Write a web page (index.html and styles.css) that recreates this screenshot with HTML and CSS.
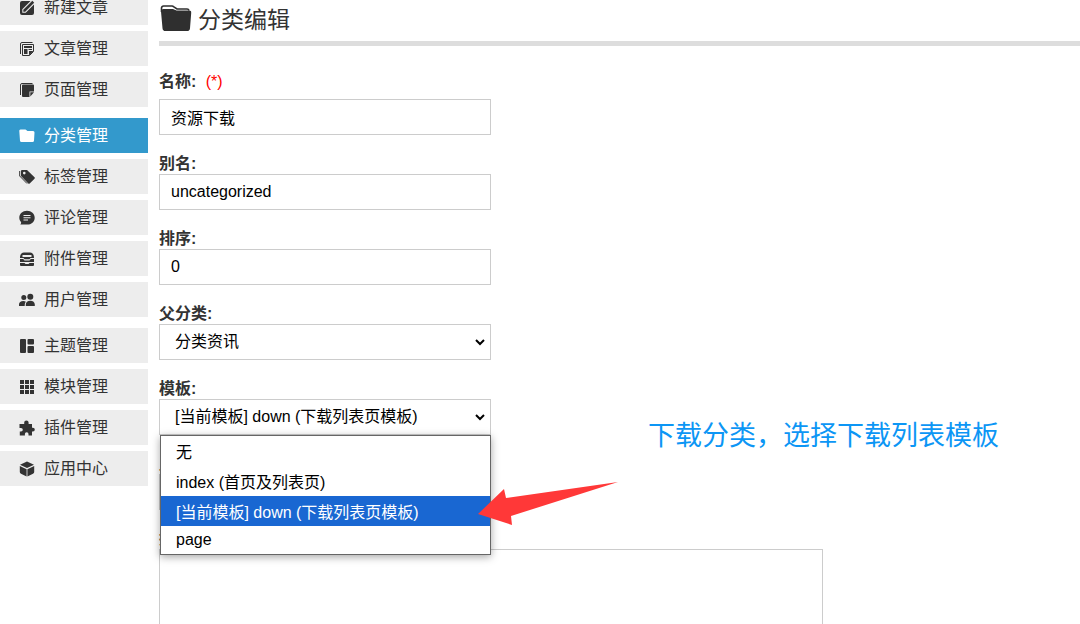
FILE: index.html
```
<!DOCTYPE html>
<html lang="zh-CN">
<head>
    <meta charset="UTF-8">
    <meta name="viewport" content="width=device-width, initial-scale=1.0">
    <title>分类编辑</title>
    <link rel="stylesheet" href="styles.css">
</head>
<body>
<div class="layout">

    <nav class="sidebar">
        <ul class="menu-group">
            <li><a href="#">
                <svg class="icon" viewBox="0 0 16 16"><path d="M3 1h8.500L3.300 9.300v3.400h3.400L15 4.500V13a2 2 0 0 1-2 2H3a2 2 0 0 1-2-2V3a2 2 0 0 1 2-2z"/><path d="M13.300.8l1.900 1.900-9 9H4.300V9.800z"/></svg>
                <span>新建文章</span></a></li>
            <li><a href="#">
                <svg class="icon" viewBox="0 0 16 16"><path class="line" d="M1.500 13V3A1.500 1.500 0 0 1 3 1.500h10.500M3.500 3.500h11v7l-4 4h-7z"/><path d="M5 5h8v2H5zM5 8h3.500v5H5zM9.500 8H13v1H9.500zM10 10h4.500L10 14.500z"/></svg>
                <span>文章管理</span></a></li>
            <li><a href="#">
                <svg class="icon" viewBox="0 0 16 16"><path class="line" d="M1.500 13V3A1.500 1.500 0 0 1 3 1.500h10.500"/><path d="M4 2.500h10a1 1 0 0 1 1 1v6h-4.500V15H4a1 1 0 0 1-1-1V3.500a1 1 0 0 1 1-1zM11.300 10.300H15l-3.700 4.200z"/></svg>
                <span>页面管理</span></a></li>
        </ul>
        <ul class="menu-group">
            <li><a href="#" class="active">
                <svg class="icon" viewBox="0 0 16 16"><path d="M1.500 1.500h5l2 1.500h5.500a1.500 1.500 0 0 1 1.500 1.600l-.5 8.100a1.500 1.500 0 0 1-1.500 1.300h-11A1.500 1.500 0 0 1 1 12.700L.3 3A1.300 1.300 0 0 1 1.500 1.500z"/></svg>
                <span>分类管理</span></a></li>
            <li><a href="#">
                <svg class="icon" viewBox="0 0 16 16"><path class="line" d="M.700 2v5L8 14.500"/><path fill-rule="evenodd" d="M3 1h5L15.500 8.300a1 1 0 0 1 0 1.400l-4.800 4.800a1 1 0 0 1-1.400 0L2 7V2a1 1 0 0 1 1-1zM5.300 2.800a1.300 1.300 0 1 0 0 2.600 1.300 1.300 0 0 0 0-2.600z"/></svg>
                <span>标签管理</span></a></li>
            <li><a href="#">
                <svg class="icon" viewBox="0 0 16 16"><path fill-rule="evenodd" d="M8 .8c4.400 0 7.700 2.900 7.700 6.900S12.400 14.600 8 14.600H1.200c.9-.9 1.100-1.800.8-2.700C.9 10.800.3 9.300.3 7.700.3 3.700 3.600.8 8 .8zM4.500 5v1h7V5zm0 2.200v1h7v-1zm0 2.200v1H9v-1z"/></svg>
                <span>评论管理</span></a></li>
            <li><a href="#">
                <svg class="icon" viewBox="0 0 16 16"><path fill-rule="evenodd" d="M5 1.500h6c2.800 0 4 2.500 4 5.500h-3.500l-1 1.200h-5L4.500 7H1c0-3 1.200-5.500 4-5.500zM3.500 4v2h9V4z"/><path d="M1 8h3.200l1.300 1.500h5L11.800 8H15v3H1zM1 12h4.500l1 1h3l1-1H15v2a1 1 0 0 1-1 1H2a1 1 0 0 1-1-1z"/></svg>
                <span>附件管理</span></a></li>
            <li><a href="#">
                <svg class="icon" viewBox="0 0 16 16"><circle cx="4.800" cy="5.500" r="2.500"/><circle cx="11.300" cy="4.800" r="3"/><path d="M0 14v-1.500C0 10.500 1.800 9 4.300 9c1 0 1.900.2 2.600.7C6 10.700 5.700 12 5.700 14zM6.800 14v-1.500c0-2.200 1.800-3.700 4.500-3.700s4.500 1.500 4.500 3.700V14z"/></svg>
                <span>用户管理</span></a></li>
        </ul>
        <ul class="menu-group">
            <li><a href="#">
                <svg class="icon" viewBox="0 0 16 16"><rect x="1" y="1" width="6" height="14" rx="1"/><rect x="8.500" y="1" width="6.500" height="5.500" rx="1"/><rect x="8.500" y="8" width="6.500" height="7" rx="1"/></svg>
                <span>主题管理</span></a></li>
            <li><a href="#">
                <svg class="icon" viewBox="0 0 16 16"><path d="M1 1h4v4H1zM6 1h4v4H6zM11 1h4v4h-4zM1 6h4v4H1zM6 6h4v4H6zM11 6h4v4h-4zM1 11h4v4H1zM6 11h4v4H6zM11 11h4v4h-4z"/></svg>
                <span>模块管理</span></a></li>
            <li><a href="#">
                <svg class="icon" viewBox="0 0 16 16"><path d="M5.200 4V2.600a2.200 2.200 0 0 1 4.400 0V4H13v3.700h.9a1.900 1.900 0 0 1 0 3.800H13v4H9.500V14a1.800 1.800 0 0 0-3.600 0v1.500H.8v-4H2a1.800 1.800 0 0 0 0-3.600H.5V4z"/></svg>
                <span>插件管理</span></a></li>
            <li><a href="#">
                <svg class="icon" viewBox="0 0 16 16"><path d="M8 .5l7 3.200-7 3.400-7-3.400zM.8 5l6.800 3.200v7.300L2 12.800A2 2 0 0 1 .8 11zM15.200 5L8.400 8.200v7.300l5.600-2.700a2 2 0 0 0 1.200-1.800z"/></svg>
                <span>应用中心</span></a></li>
        </ul>
    </nav>

    <main class="content">
        <h1 class="page-title">
            <svg class="title-icon" viewBox="0 0 32 28"><path d="M1.500 8V4a2 2 0 0 1 2-2h8.500a2 2 0 0 1 1.500.6L17 5h10a2 2 0 0 1 2 1.500" fill="none" stroke="#2f2f2f" stroke-width="1.600"/><path d="M1 7.500Q1 5 3.500 5H13l3.500 1.500H29a2.200 2.200 0 0 1 2.200 2.400l-1.200 15.300a3 3 0 0 1-3 2.800H5.500a3 3 0 0 1-3-2.800z"/></svg>
            <span>分类编辑</span>
        </h1>

        <form class="edit-form">
            <div class="field field-first">
                <label for="edtName">名称: <span class="star">(*)</span></label>
                <input type="text" id="edtName" value="资源下载">
            </div>
            <div class="field">
                <label for="edtAlias">别名:</label>
                <input type="text" id="edtAlias" value="uncategorized">
            </div>
            <div class="field">
                <label for="edtOrder">排序:</label>
                <input type="text" id="edtOrder" value="0">
            </div>
            <div class="field">
                <label for="edtParentID">父分类:</label>
                <select id="edtParentID">
                    <option>分类资讯</option>
                </select>
            </div>
            <div class="field">
                <label for="cmbTemplate">模板:</label>
                <div class="dropdown">
                    <select id="cmbTemplate">
                        <option>[当前模板] down (下载列表页模板)</option>
                    </select>
                    <ul class="dropdown-list" role="listbox" aria-label="模板">
                        <li role="option">无</li>
                        <li role="option">index (首页及列表页)</li>
                        <li role="option" class="selected" aria-selected="true">[当前模板] down (下载列表页模板)</li>
                        <li role="option">page</li>
                    </ul>
                    <svg class="tip-arrow" viewBox="0 0 140 44"><path d="M0 32L26 7l2 9L140 0 33 34l1 9z"/></svg>
                    <p class="tip-text">下载分类，选择下载列表模板</p>
                </div>
            </div>
            <div class="field">
                <label for="cmbLogTemplate">此目录下文章的默认模板:</label>
                <select id="cmbLogTemplate"></select>
            </div>
            <div class="field">
                <label for="edtIntro">摘要:</label>
                <textarea id="edtIntro" rows="6"></textarea>
            </div>
        </form>
    </main>

</div>
</body>
</html>
```

FILE: styles.css
```
* {
    box-sizing: border-box;
}
body {
    margin: 0;
    height: 100vh;
    overflow: hidden;
    background: #fff;
    color: #333;
    font: 16px/24px "Liberation Sans", "Noto Sans CJK SC", sans-serif;
}
ul {
    margin: 0;
    padding: 0;
    list-style: none;
}
.layout {
    display: flex;
    gap: 11px;
}

/* 左侧菜单 */
.sidebar {
    flex: 0 0 148px;
    display: flex;
    flex-direction: column;
    gap: 11px;
    margin-top: -10px;
}
.menu-group {
    display: flex;
    flex-direction: column;
    gap: 6px;
}
.menu-group a {
    display: flex;
    align-items: center;
    gap: 9px;
    height: 35px;
    padding-left: 19px;
    background: #ededed;
    color: #333;
    text-decoration: none;
}
.menu-group a.active {
    background: #3399cc;
    color: #fff;
}
.icon {
    width: 16px;
    height: 16px;
    fill: currentColor;
}
.icon .line {
    fill: none;
    stroke: currentColor;
}

/* 右侧内容 */
.content {
    flex: 1;
    min-width: 0;
}
.page-title {
    display: flex;
    align-items: center;
    gap: 6px;
    height: 46px;
    margin: 0;
    padding: 0 0 2px 1px;
    border-bottom: 5px solid #ddd;
    font-size: 23px;
    font-weight: normal;
}
.title-icon {
    width: 32px;
    height: 28px;
    margin-bottom: 4px;
    fill: #2f2f2f;
}
.edit-form {
    display: flex;
    flex-direction: column;
    gap: 19px;
    padding-top: 26px;
}
.field label {
    display: block;
    height: 20px;
    line-height: 20px;
    font-weight: bold;
    white-space: nowrap;
}
.field-first label {
    height: 27px;
}
.star {
    margin-left: 5px;
    color: #f00;
    font-weight: normal;
}
.field input,
.field select,
.field textarea {
    display: block;
    width: 332px;
    max-width: 100%;
    height: 36px;
    padding: 0 11px;
    border: 1px solid #ccc;
    border-radius: 0;
    background: #fff;
    color: #000;
    font: inherit;
}
.field select {
    padding: 0 15px;
    appearance: none;
    background: #fff url("data:image/svg+xml,%3Csvg xmlns='http://www.w3.org/2000/svg' width='10' height='7'%3E%3Cpath d='M1 1l4 4 4-4' fill='none' stroke='%23000' stroke-width='2'/%3E%3C/svg%3E") no-repeat right 5px center;
}
.field textarea {
    width: 664px;
    height: 160px;
    resize: none;
}

/* 展开的下拉列表 */
.dropdown {
    position: relative;
    width: 332px;
}
.dropdown-list {
    position: absolute;
    top: 36px;
    left: 1px;
    right: 0;
    z-index: 1;
    border: 1px solid #666;
    background: #fff;
    box-shadow: 0 2px 8px rgba(0, 0, 0, 0.35);
    color: #000;
}
.dropdown-list li {
    padding: 4px 0 0 15px;
    line-height: 26px;
}
.dropdown-list li:last-child {
    padding-top: 0;
    line-height: 28px;
}
.dropdown-list .selected {
    background: #1967d2;
    color: #fff;
}
.tip-arrow {
    position: absolute;
    top: 83px;
    left: 319px;
    z-index: 2;
    width: 140px;
    height: 44px;
    fill: #ff3838;
}
.tip-text {
    position: absolute;
    top: 19px;
    left: 489px;
    margin: 0;
    color: #0c96f5;
    font-size: 27px;
    line-height: 36px;
    white-space: nowrap;
}
```
